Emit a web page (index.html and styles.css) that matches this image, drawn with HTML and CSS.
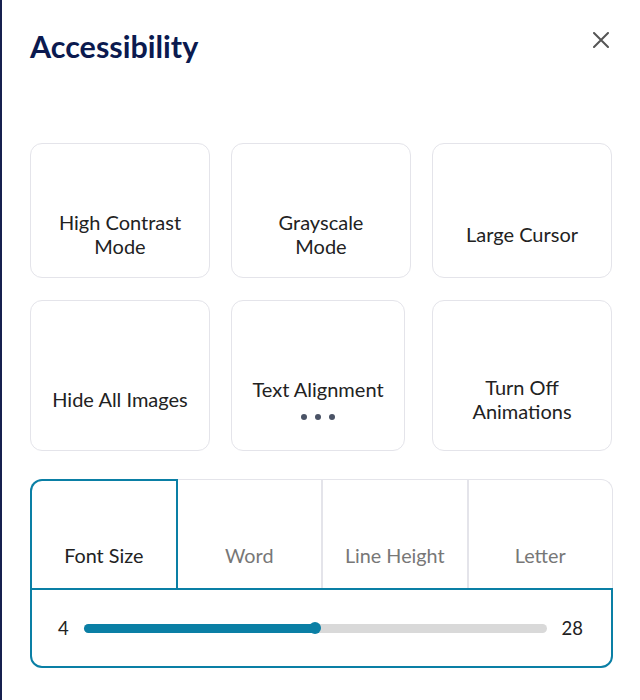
FILE: index.html
```html
<!DOCTYPE html>
<html lang="en">
<head>
<meta charset="utf-8">
<title>Accessibility</title>
<link rel="stylesheet" href="styles.css">
</head>
<body>
<div class="edge"></div>
<main class="panel">
  <header class="header">
    <h1 class="title">Accessibility</h1>
    <button class="close" aria-label="Close">
      <svg width="16" height="16" viewBox="0 0 16 16"><path d="M1 1 L15 15 M15 1 L1 15" stroke="#555" stroke-width="2" stroke-linecap="round" fill="none"/></svg>
    </button>
  </header>

  <section class="grid">
    <div class="card"><span class="label">High Contrast<br>Mode</span></div>
    <div class="card"><span class="label">Grayscale<br>Mode</span></div>
    <div class="card"><span class="label">Large Cursor</span></div>
    <div class="card"><span class="label">Hide All Images</span></div>
    <div class="card card-narrow">
      <span class="label">Text Alignment</span>
      <span class="dots"><i></i><i></i><i></i></span>
    </div>
    <div class="card"><span class="label">Turn Off<br>Animations</span></div>
  </section>

  <section class="sizer">
    <div class="tabs">
      <div class="tab tab-active">Font Size</div>
      <div class="tab">Word</div>
      <div class="tab">Line Height</div>
      <div class="tab tab-last">Letter</div>
    </div>
    <div class="slider-panel">
      <span class="num">4</span>
      <div class="track"><div class="fill" style="width:50%"><span class="thumb"></span></div></div>
      <span class="num">28</span>
    </div>
  </section>
</main>
</body>
</html>
```

FILE: styles.css
```css
* { box-sizing: border-box; }
html, body { margin: 0; padding: 0; background: #fff; }
body {
  display: flex;
  min-height: 100vh;
  font-family: Lato, "Open Sans", "Liberation Sans", sans-serif;
  color: #222;
}
.edge {
  width: 2px;
  flex: 0 0 2px;
  background: #16204f;
}
.panel {
  flex: 1;
  padding: 29px 28px 0 28px;
}
.header {
  display: flex;
  justify-content: space-between;
  align-items: flex-start;
}
.title {
  margin: 0;
  font-size: 30.5px;
  line-height: 34px;
  font-weight: 700;
  color: #0b1a4f;
}
.close {
  width: 24px;
  height: 24px;
  margin-top: -1px;
  padding: 0;
  border: 0;
  background: none;
  display: flex;
  align-items: center;
  justify-content: center;
}
.grid {
  margin-top: 80px;
  display: grid;
  grid-template-columns: repeat(3, 180px);
  grid-template-rows: 135px 151px;
  column-gap: 21px;
  row-gap: 22px;
}
.card {
  border: 1.5px solid #e4e4ea;
  border-radius: 12px;
  padding: 66px 8px 20px;
  display: flex;
  flex-direction: column;
  align-items: center;
  justify-content: center;
  text-align: center;
  background: #fff;
}
.card-narrow { margin-right: 6px; }
.label {
  font-size: 20px;
  line-height: 24px;
  color: #222;
}
.dots {
  display: flex;
  gap: 8px;
  margin-top: 13px;
}
.dots i {
  display: block;
  width: 6px;
  height: 6px;
  border-radius: 50%;
  background: #4a5366;
}
.sizer {
  margin-top: 28px;
  width: 583px;
}
.tabs {
  display: flex;
  height: 109px;
}
.tab {
  flex: 1;
  display: flex;
  align-items: flex-end;
  justify-content: center;
  padding-bottom: 21px;
  font-size: 19.8px;
  line-height: 24px;
  color: #777;
  border-top: 1.5px solid #e4e4ea;
  border-right: 2.5px solid #e4e4ea;
}
.tab-last {
  border-right: 1.5px solid #e4e4ea;
  border-top-right-radius: 12px;
}
.tab-active {
  color: #222;
  border: 2px solid #0a7fa5;
  border-bottom: 0;
  border-top-left-radius: 12px;
}
.slider-panel {
  height: 80px;
  border: 2px solid #0a7fa5;
  border-radius: 0 0 12px 12px;
  display: flex;
  align-items: center;
  padding: 0 28px 0 26px;
  gap: 15px;
}
.num {
  font-size: 18.5px;
  line-height: 24px;
  color: #222;
}
.track {
  flex: 1;
  height: 9px;
  border-radius: 5px;
  background: #d9d9d9;
  display: flex;
}
.fill {
  height: 100%;
  background: #0a7fa5;
  border-radius: 5px;
  display: flex;
  justify-content: flex-end;
  align-items: center;
}
.thumb {
  display: block;
  width: 12px;
  height: 12px;
  margin-right: -6px;
  border-radius: 50%;
  background: #0a7fa5;
}
```
